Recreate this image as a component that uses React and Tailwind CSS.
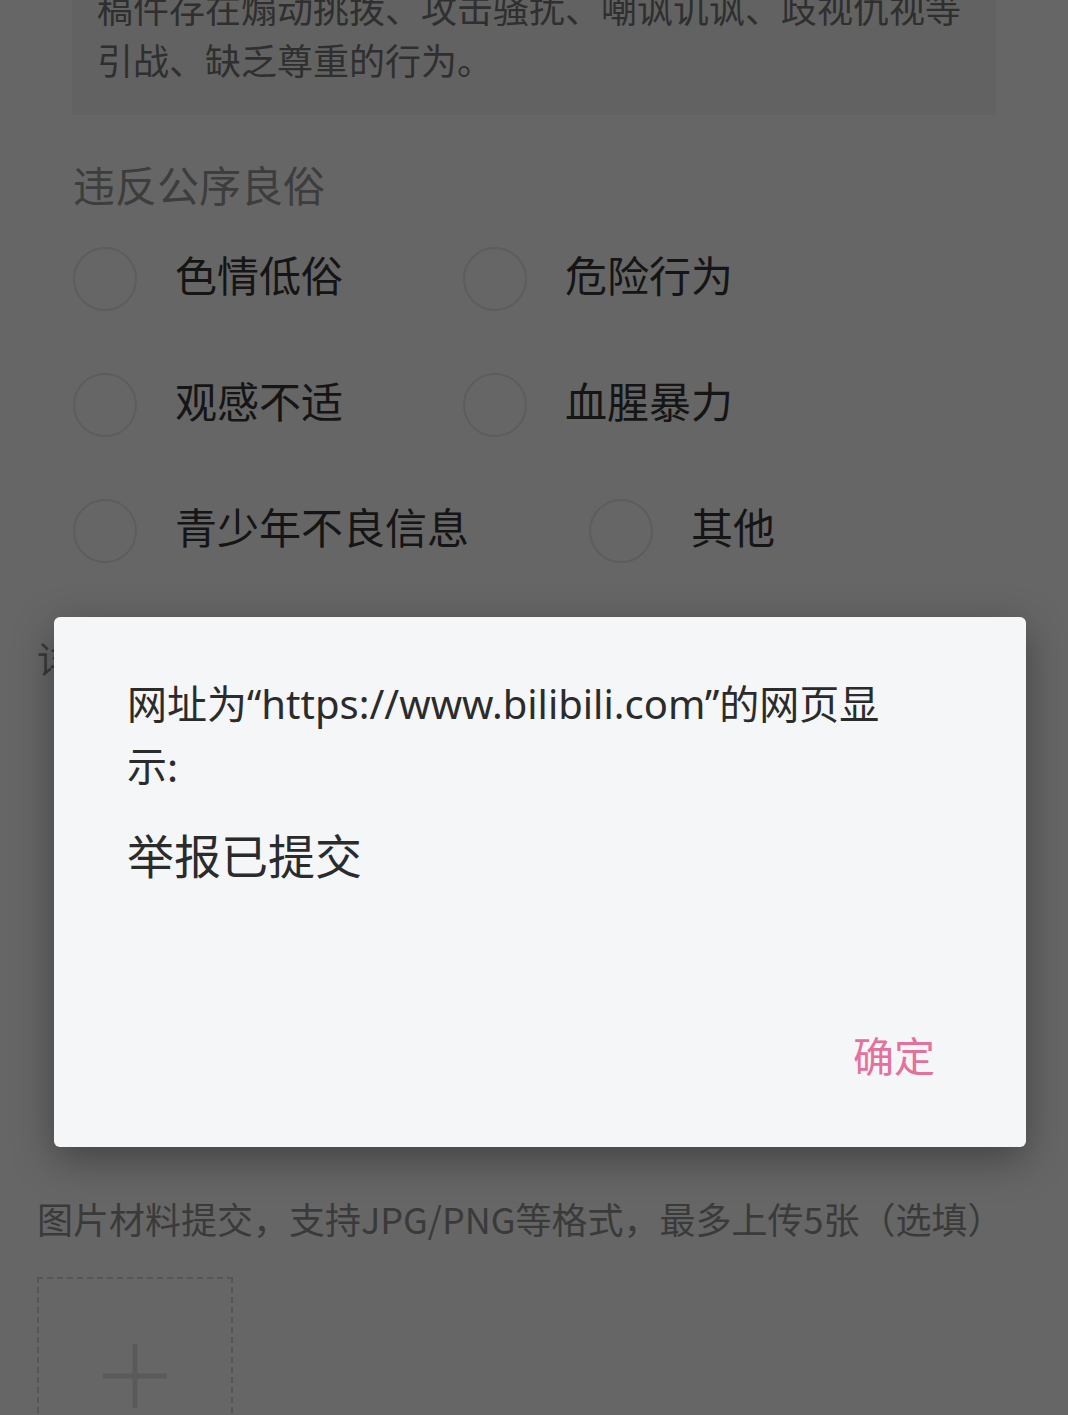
import React from 'react';

const OPTIONS = [
  '色情低俗',
  '危险行为',
  '观感不适',
  '血腥暴力',
  '青少年不良信息',
  '其他',
];

function RadioItem({ label }) {
  return (
    <div className="flex items-center h-[126px] mr-[120px]">
      <span className="w-[64px] h-[64px] rounded-full border-2 border-[#5d5d5d] shrink-0" />
      <span className="ml-[38px] mb-[10px] text-[42px] leading-none text-[#151515]">{label}</span>
    </div>
  );
}

function AlertDialog() {
  return (
    <div className="absolute inset-0 pt-[617px] pl-[54px]">
      <div className="w-[972px] h-[530px] rounded-[6px] bg-[#f5f6f8] shadow-[0_12px_40px_rgba(0,0,0,0.35)] flex flex-col pl-[73px] pr-[91px] pt-[55px] pb-[69px]">
        <p className="text-[40px] leading-[60px] text-[#2b2b2b] whitespace-nowrap">
          网址为
          <span style={{ fontFamily: '"Noto Sans", Roboto, sans-serif' }}>“https://www.bilibili.com”</span>
          的网页显
          <br />
          示:
        </p>
        <p className="mt-[30px] text-[47px] leading-[60px] text-[#2b2b2b]">举报已提交</p>
        <div className="mt-auto flex justify-end">
          <button className="text-[41px] leading-[48px] text-[#e5709b]">确定</button>
        </div>
      </div>
    </div>
  );
}

export default function App() {
  return (
    <div
      className="relative h-[1415px] overflow-hidden bg-[#666666]"
      style={{ fontFamily: '"Noto Sans CJK SC", "Noto Sans", sans-serif' }}
    >
      {/* reason description */}
      <div className="mx-[72px] mt-[-39px] bg-[#626262] pl-[25px] pr-[20px] pt-[20px] pb-[30px]">
        <p className="text-[36px] leading-[52px] text-[#2f2f2f]">
          稿件存在煽动挑拨、攻击骚扰、嘲讽讥讽、歧视仇视等引战、缺乏尊重的行为。
        </p>
      </div>

      {/* category */}
      <div className="pl-[73px] pr-[40px]">
        <h3 className="mt-[48px] text-[42px] leading-[42px] text-[#3d3d3d]">违反公序良俗</h3>
        <div className="mt-[11px] flex flex-wrap">
          {OPTIONS.map((o) => (
            <RadioItem key={o} label={o} />
          ))}
        </div>
      </div>

      {/* detail section, mostly under the dialog */}
      <div className="pl-[37px] pr-[37px]">
        <p className="mt-[44px] text-[37px] leading-[40px] text-[#3a3a3a]">详细说明</p>
        <div className="h-[520px]" />
        <p className="text-[36px] leading-[40px] text-[#3a3a3a] whitespace-nowrap">
          图片材料提交，支持JPG/PNG等格式，最多上传5张（选填）
        </p>
        <div className="mt-[39px] w-[196px] h-[196px] border-2 border-dashed border-[#555555] flex items-center justify-center">
          <svg width="68" height="68" viewBox="0 0 68 68" className="mt-[2px]">
            <path d="M34 2v64M2 34h64" stroke="#5a5a5a" strokeWidth="5" />
          </svg>
        </div>
      </div>

      <AlertDialog />
    </div>
  );
}
